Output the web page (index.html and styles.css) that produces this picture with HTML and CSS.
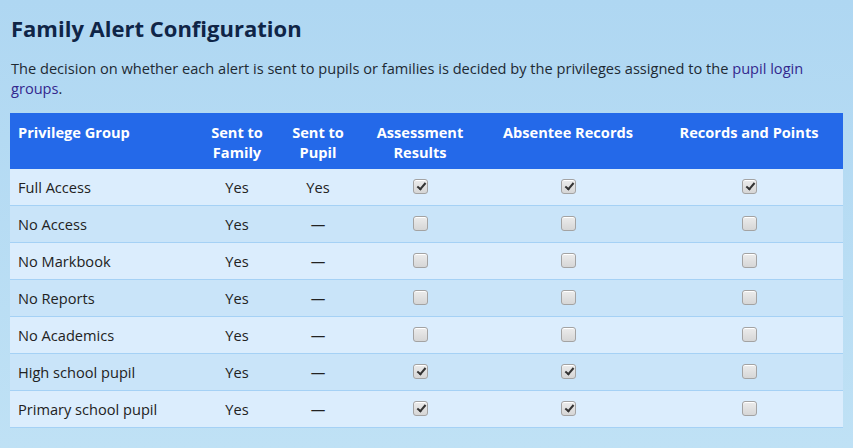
FILE: index.html
```html
<!DOCTYPE html>
<html lang="en">
<head>
<meta charset="utf-8">
<title>Family Alert Configuration</title>
<link rel="stylesheet" href="styles.css">
</head>
<body>
<main class="page">
  <h1 class="title">Family Alert Configuration</h1>
  <p class="intro">The decision on whether each alert is sent to pupils or families is decided by the privileges assigned to the <span class="hl">pupil login groups</span>.</p>
  <table class="grid">
    <colgroup>
      <col class="c1"><col class="c2"><col class="c3"><col class="c4"><col class="c5"><col class="c6">
    </colgroup>
    <thead>
      <tr>
        <th class="left">Privilege Group</th>
        <th>Sent to Family</th>
        <th>Sent to Pupil</th>
        <th>Assessment Results</th>
        <th>Absentee Records</th>
        <th>Records and Points</th>
      </tr>
    </thead>
    <tbody>
      <tr><td class="left">Full Access</td><td>Yes</td><td>Yes</td><td><span class="cb on"></span></td><td><span class="cb on"></span></td><td><span class="cb on"></span></td></tr>
      <tr><td class="left">No Access</td><td>Yes</td><td>—</td><td><span class="cb"></span></td><td><span class="cb"></span></td><td><span class="cb"></span></td></tr>
      <tr><td class="left">No Markbook</td><td>Yes</td><td>—</td><td><span class="cb"></span></td><td><span class="cb"></span></td><td><span class="cb"></span></td></tr>
      <tr><td class="left">No Reports</td><td>Yes</td><td>—</td><td><span class="cb"></span></td><td><span class="cb"></span></td><td><span class="cb"></span></td></tr>
      <tr><td class="left">No Academics</td><td>Yes</td><td>—</td><td><span class="cb"></span></td><td><span class="cb"></span></td><td><span class="cb"></span></td></tr>
      <tr><td class="left">High school pupil</td><td>Yes</td><td>—</td><td><span class="cb on"></span></td><td><span class="cb on"></span></td><td><span class="cb"></span></td></tr>
      <tr><td class="left">Primary school pupil</td><td>Yes</td><td>—</td><td><span class="cb on"></span></td><td><span class="cb on"></span></td><td><span class="cb"></span></td></tr>
    </tbody>
  </table>
</main>
</body>
</html>
```
FILE: styles.css
```css
html, body {
  margin: 0;
  padding: 0;
}
body {
  min-height: 448px;
  background: linear-gradient(#afd7f2, #bfe1f5);
  font-family: "Open Sans", "Noto Sans", sans-serif;
  color: #222;
}
.page {
  padding: 13px 10px 10px 10px;
}
.title {
  margin: 0;
  font-size: 22px;
  line-height: 30px;
  font-weight: 700;
  color: #0f2547;
  padding-left: 1px;
}
.intro {
  margin: 15px 0 15px 1px;
  font-size: 14.6px;
  line-height: 20px;
  color: #1e2a33;
}
.hl {
  color: #34288e;
}
.grid {
  width: 833px;
  table-layout: fixed;
  border-collapse: collapse;
  font-size: 14.6px;
  line-height: 20px;
}
.c1 { width: 187px; }
.c2 { width: 80px; }
.c3 { width: 82px; }
.c4 { width: 122px; }
.c5 { width: 174px; }
.c6 { width: 188px; }
.grid th {
  background: #2469e9;
  color: #fff;
  font-weight: 700;
  text-align: center;
  vertical-align: top;
  padding: 9px 6px 7px;
}
.grid th.left {
  padding-left: 8px;
}
.grid td {
  text-align: center;
  padding: 8px 8px;
  border-bottom: 1px solid #a5d1f5;
}
.grid .left {
  text-align: left;
}
.grid tbody tr:nth-child(odd) td {
  background: #dbedfd;
}
.grid tbody tr:nth-child(even) td {
  background: #c9e4f9;
}
.cb {
  display: inline-block;
  width: 13px;
  height: 13px;
  border: 1px solid #a3a3a3;
  border-radius: 3px;
  background: linear-gradient(#ececec, #d6d6d6);
  box-shadow: inset 0 1px 0 #fff;
  vertical-align: -1px;
  position: relative;
}
.cb.on::after {
  content: "";
  position: absolute;
  left: 5px;
  top: 1px;
  width: 3px;
  height: 7px;
  border: solid #333;
  border-width: 0 2.5px 2.5px 0;
  transform: rotate(40deg);
}
```
